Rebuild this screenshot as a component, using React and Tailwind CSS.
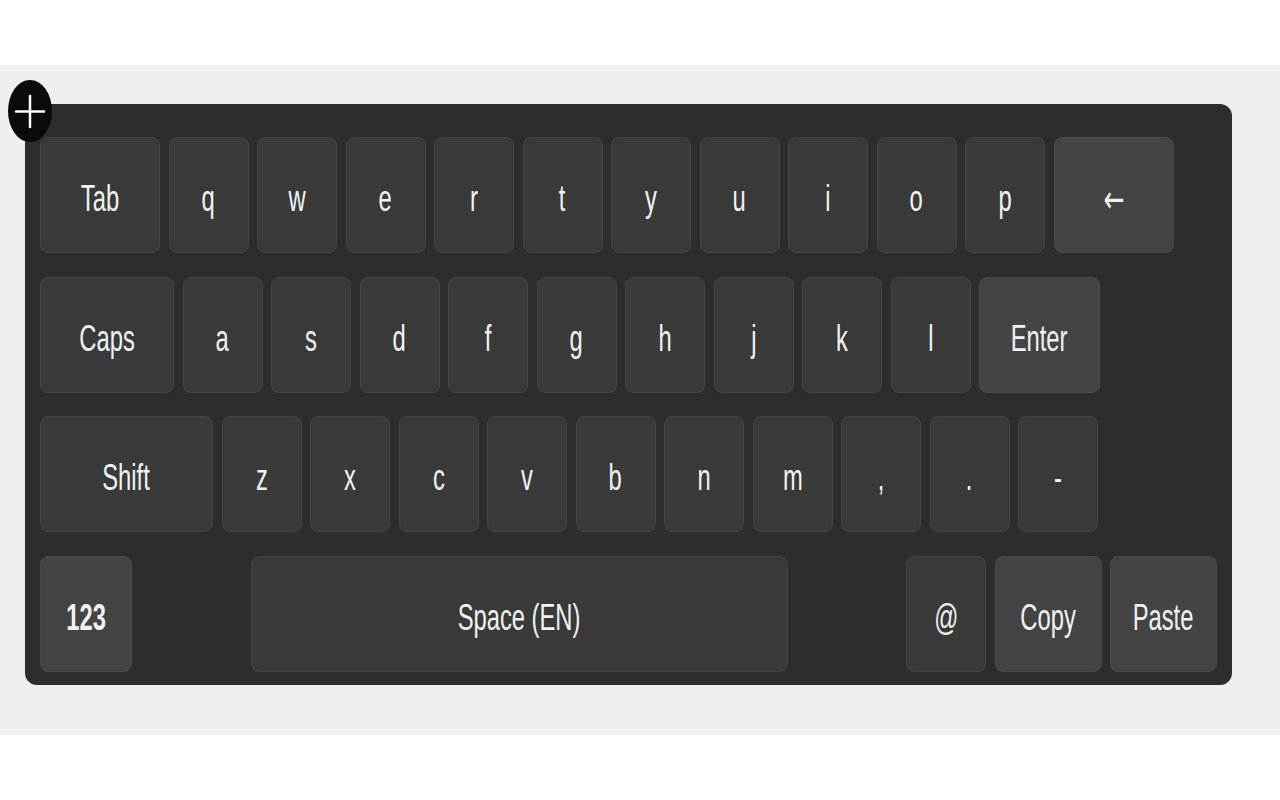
import React from 'react';

const rows = [
  [
    { label: 'Tab', w: 120 },
    ...'qwertyuiop'.split('').map((c) => ({ label: c, w: 80 })),
    { label: '←', w: 120, special: true, arrow: true },
  ],
  [
    { label: 'Caps', w: 134 },
    ...'asdfghjkl'.split('').map((c) => ({ label: c, w: 80 })),
    { label: 'Enter', w: 121, special: true },
  ],
  [
    { label: 'Shift', w: 173 },
    ...'zxcvbnm,.-'.split('').map((c) => ({ label: c, w: 80 })),
  ],
];

function Key({ label, w, special, bold, arrow, className = '' }) {
  return (
    <div
      className={`h-[116px] shrink-0 rounded-[8px] border flex items-center justify-center text-[#f2f2f2] ${
        special ? 'bg-[#444444] border-[#4a4a4a]' : 'bg-[#3a3a3a] border-[#454545]'
      } ${className}`}
      style={{ width: w }}
    >
      <span
        className={`inline-block scale-x-[0.66] leading-none translate-y-[4px] ${bold ? 'font-bold' : ''} ${
          arrow ? "text-[38px] font-['DejaVu_Sans',sans-serif]" : 'text-[36px]'
        }`}
      >
        {label}
      </span>
    </div>
  );
}

export default function App() {
  return (
    <div className="w-[1280px] h-[800px] bg-white pt-[65px] font-['Liberation_Sans',Arial,sans-serif]">
      <div className="h-[670px] bg-[#efefef] pt-[39px] pl-[25px] relative">
        {/* add button */}
        <div className="absolute left-[8px] top-[15px] w-[44px] h-[62px] rounded-[50%] bg-[#0a0a0a] flex items-center justify-center z-10">
          <svg width="32" height="40" viewBox="0 0 32 40">
            <path d="M16 5 V36 M2 20.5 H30" stroke="#ffffff" strokeWidth="2.5" strokeLinecap="round" />
          </svg>
        </div>

        <div className="w-[1207px] h-[581px] bg-[#2d2d2d] rounded-[12px] pt-[33px] px-[15px] flex flex-col gap-[23.5px]">
          {rows.map((row, i) => (
            <div key={i} className="flex gap-[8.5px]">
              {row.map((k) => (
                <Key key={k.label} {...k} />
              ))}
            </div>
          ))}
          <div className="flex gap-[8.5px]">
            <Key label="123" w={92} special bold />
            <Key label="Space (EN)" w={537} className="ml-[110.5px]" />
            <Key label="@" w={80} className="ml-[109.5px]" />
            <Key label="Copy" w={107} special />
            <Key label="Paste" w={107} special />
          </div>
        </div>
      </div>
    </div>
  );
}
